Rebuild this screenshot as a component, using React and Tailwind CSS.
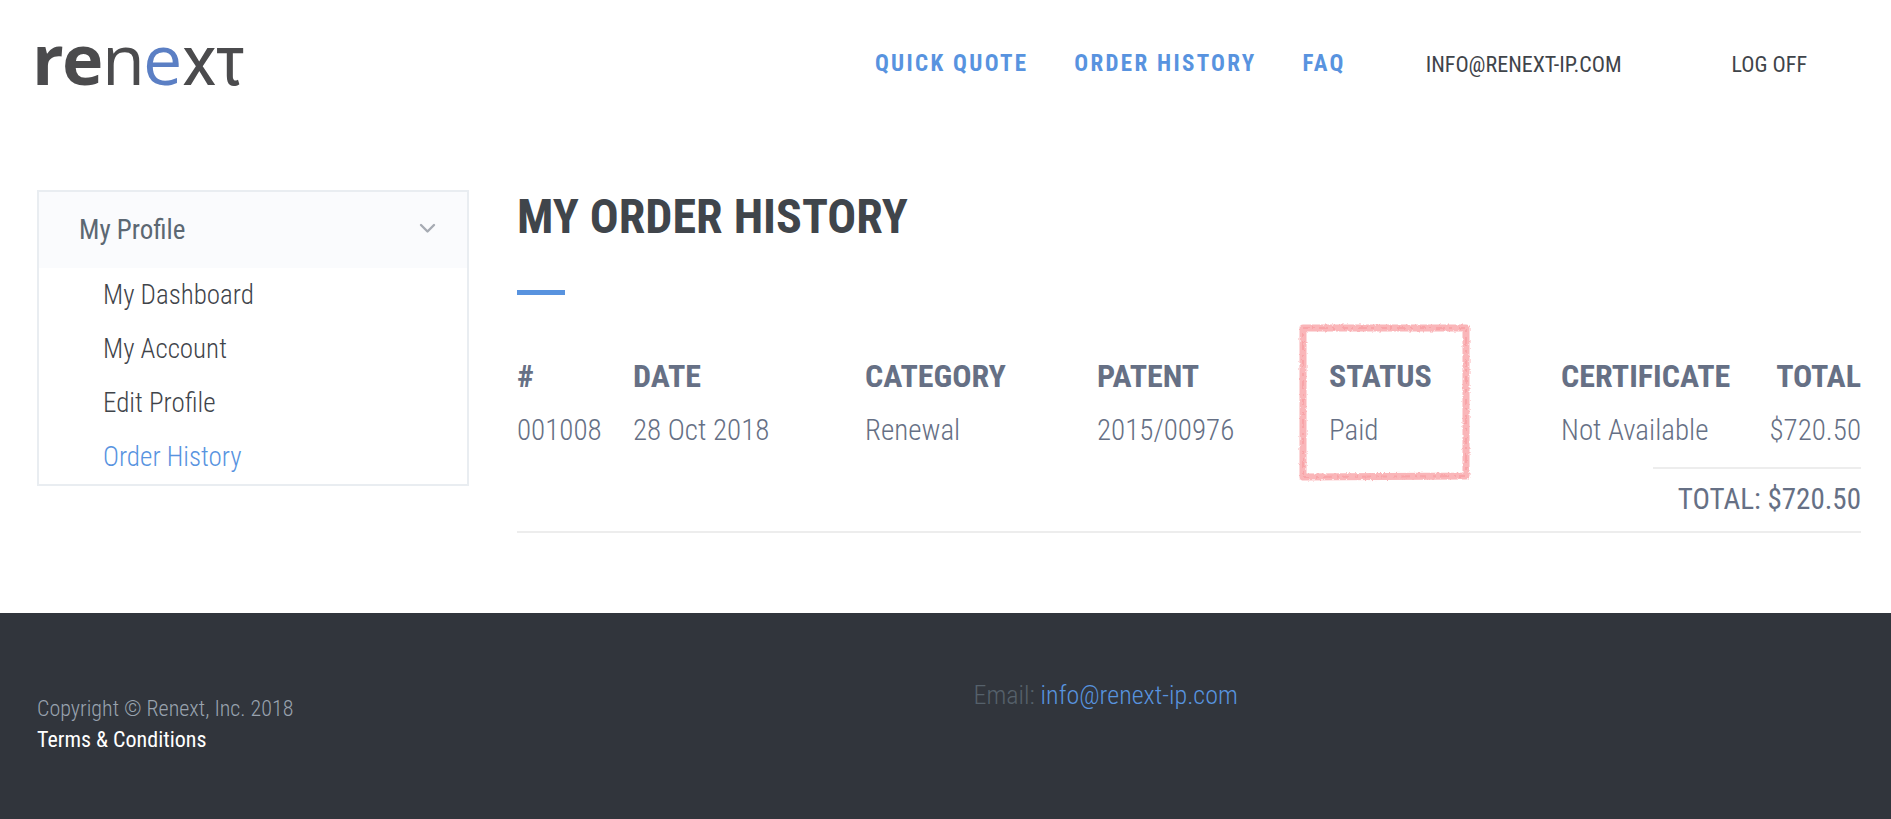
import React from "react";

const NAV_LINKS = ["Quick Quote", "Order History", "FAQ"];

const PROFILE_LINKS = [
  { label: "My Dashboard" },
  { label: "My Account" },
  { label: "Edit Profile" },
  { label: "Order History", active: true },
];

const ORDERS = [
  {
    id: "001008",
    date: "28 Oct 2018",
    category: "Renewal",
    patent: "2015/00976",
    status: "Paid",
    certificate: "Not Available",
    total: "$720.50",
  },
];

function Logo() {
  return (
    <a href="#" aria-label="renext" className="block">
      <svg width="230" height="112" viewBox="0 0 230 112" className="block font-['Open_Sans',sans-serif]" fontSize="70" fill="#4b4b4d">
        <text y="77">
          <tspan x="3" fontWeight="700">r</tspan>
          <tspan x="33" fontWeight="700">e</tspan>
          <tspan x="73">n</tspan>
          <tspan x="114" fill="#5b7fc4">e</tspan>
          <tspan x="153" className="font-[Roboto,sans-serif]">x</tspan>
          <tspan x="185" className="font-['Roboto_Condensed',sans-serif]">τ</tspan>
        </text>
      </svg>
    </a>
  );
}

function Header() {
  return (
    <header className="flex items-center justify-between pl-[29px] pr-[84px] pt-2">
      <Logo />
      <div className="flex items-center uppercase">
        <nav className="flex gap-[46px] text-[23px] font-bold tracking-widest text-[#5893df]">
          {NAV_LINKS.map((label) => (
            <a key={label} href="#">{label}</a>
          ))}
        </nav>
        <a href="#" className="ml-20 text-[22px] text-[#3f444a]">info@renext-ip.com</a>
        <a href="#" className="ml-[110px] text-[22px] text-[#3f444a]">Log Off</a>
      </div>
    </header>
  );
}

function ChevronIcon() {
  return (
    <svg width="24" height="22" viewBox="0 0 24 22" fill="none" stroke="#a6abb3" strokeWidth="2.4" strokeLinecap="round" strokeLinejoin="round" aria-hidden="true">
      <path d="M6 6L12.5 12.5L19 6" />
    </svg>
  );
}

function Sidebar() {
  return (
    <aside className="w-[432px] shrink-0 self-start border-2 border-[#e9edf1]">
      <button type="button" className="flex h-[76px] w-full items-center justify-between bg-[#fafbfd] pl-10 pr-7 text-[27px] text-[#5c6873]">
        My Profile
        <ChevronIcon />
      </button>
      <ul className="text-[27px] font-light leading-[54px]">
        {PROFILE_LINKS.map(({ label, active }) => (
          <li key={label}>
            <a href="#" className={active ? "block pl-16 text-[#5893df]" : "block pl-16 text-[#3f444a]"}>{label}</a>
          </li>
        ))}
      </ul>
    </aside>
  );
}

// Crayon-like frame around the status column
function StatusMarker() {
  return (
    <svg className="pointer-events-none absolute -left-2 -top-7" width="176" height="162" viewBox="0 0 176 162" fill="none" aria-hidden="true">
      <filter id="crayon" x="-5%" y="-5%" width="110%" height="110%">
        <feTurbulence type="fractalNoise" baseFrequency="0.4" numOctaves="3" seed="4" result="noise" />
        <feDisplacementMap in="SourceGraphic" in2="noise" scale="3" xChannelSelector="R" yChannelSelector="G" />
      </filter>
      <g filter="url(#crayon)" strokeLinejoin="round">
        <path d="M6 7H169V155L6 156Z" stroke="#fab6b9" strokeWidth="7" />
        <path d="M6 7H169V155L6 156Z" stroke="#f8a4a8" strokeWidth="2" strokeDasharray="6 3 2 5 9 4 3 7" />
      </g>
    </svg>
  );
}

function OrderTable() {
  return (
    <div className="-mr-6">
      <table className="w-full table-fixed whitespace-nowrap text-left leading-[54px] text-[#667085]">
        <colgroup>
          <col className="w-1/12" />
          <col className="w-2/12" />
          <col className="w-2/12" />
          <col className="w-2/12" />
          <col className="w-2/12" />
          <col className="w-2/12" />
          <col className="w-1/12" />
        </colgroup>
        <thead className="text-[32px] uppercase">
          <tr>
            <th className="pl-6">#</th>
            <th className="pl-6">Date</th>
            <th className="pl-6">Category</th>
            <th className="pl-6">Patent</th>
            <th className="relative pl-6">
              Status
              <StatusMarker />
            </th>
            <th className="pl-6">Certificate</th>
            <th className="pr-6 text-right">Total</th>
          </tr>
        </thead>
        <tbody className="text-[29px] font-light">
          {ORDERS.map((order) => (
            <tr key={order.id}>
              <td className="pl-6">{order.id}</td>
              <td className="pl-6">{order.date}</td>
              <td className="pl-6">{order.category}</td>
              <td className="pl-6">{order.patent}</td>
              <td className="pl-6">{order.status}</td>
              <td className="pl-6">{order.certificate}</td>
              <td className="pr-6 text-right">{order.total}</td>
            </tr>
          ))}
        </tbody>
      </table>
      <div className="ml-auto mr-6 mt-[10px] w-[208px] border-t-2 border-[#ededed] pb-0.5 text-right text-[29px] leading-[60px] text-[#667085]">
        TOTAL: $720.50
      </div>
    </div>
  );
}

function Footer() {
  return (
    <footer className="grid grow grid-cols-2 bg-[#31353c] px-[37px] font-light">
      <div className="pt-20 text-[22px] leading-[31px] text-[#99a3af]">
        <p>Copyright © Renext, Inc. 2018</p>
        <a href="#" className="font-normal text-white">Terms &amp; Conditions</a>
      </div>
      <p className="pl-7 pt-[66px] text-[26px] leading-8 text-[#56616b]">
        Email: <a href="#" className="text-[#5893df]">info@renext-ip.com</a>
      </p>
    </footer>
  );
}

export default function App() {
  return (
    <div className="flex min-h-screen flex-col bg-white font-['Roboto_Condensed','Liberation_Sans_Narrow',Roboto,sans-serif]">
      <Header />
      <main className="flex gap-6 pb-20 pl-[37px] pr-[30px] pt-[70px]">
        <Sidebar />
        <section className="min-w-0 grow">
          <h1 className="pl-6 text-5xl font-bold leading-[54px] text-[#40454b]">MY ORDER HISTORY</h1>
          <div className="mb-[54px] ml-6 mt-[46px] h-[5px] w-12 bg-[#5893df]" />
          <OrderTable />
          <div className="ml-6 border-t-2 border-[#ededed]" />
        </section>
      </main>
      <Footer />
    </div>
  );
}
